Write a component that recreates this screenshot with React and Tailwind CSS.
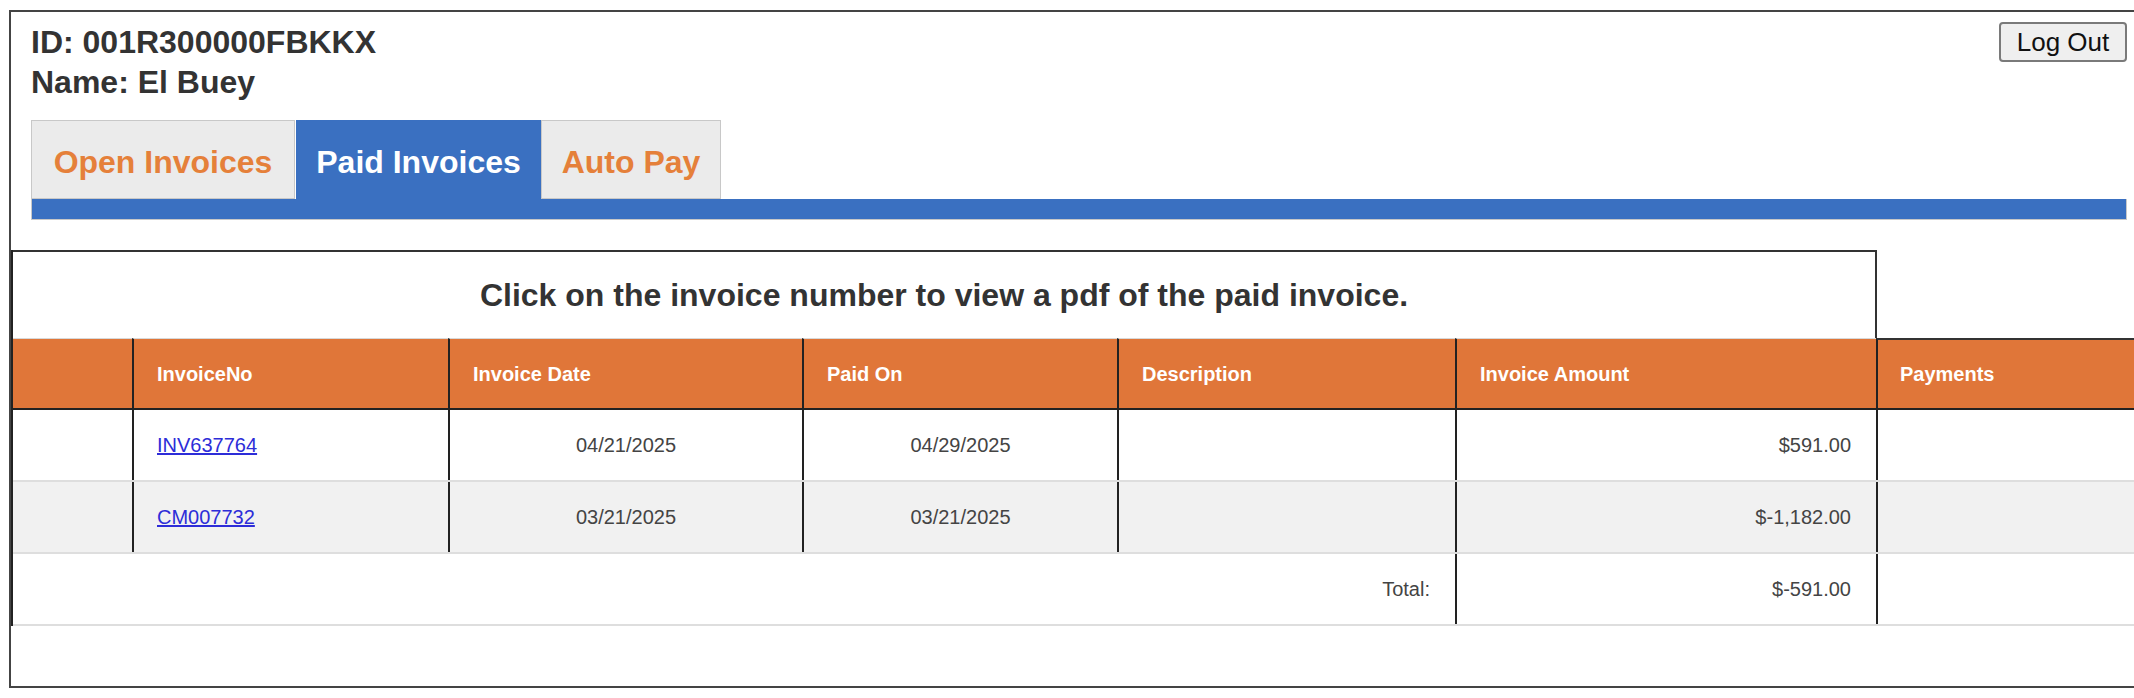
const rows = [
  { no: 'INV637764', date: '04/21/2025', paid: '04/29/2025', desc: '', amount: '$591.00', striped: false },
  { no: 'CM007732', date: '03/21/2025', paid: '03/21/2025', desc: '', amount: '$-1,182.00', striped: true },
];

const tabs = [
  { label: 'Open Invoices', width: 'w-[264px]', active: false },
  { label: 'Paid Invoices', width: 'w-[245px]', active: true },
  { label: 'Auto Pay', width: 'w-[180px]', active: false },
];

const gridCols = 'grid grid-cols-[119px_316px_354px_315px_338px_421px_1fr]';

const App = () => {
  return (
    <div className="w-[2134px] h-[698px] overflow-hidden bg-white font-['Liberation_Sans',Arial,sans-serif]">
      <div className="ml-[9px] mt-[10px] w-[2200px] h-[678px] border-2 border-[#444]">
        {/* account header + tabs */}
        <div className="ml-[20px] w-[2096px]">
          <div className="pt-[10px] flex items-start justify-between">
            <div className="text-[32px] leading-[40px] font-bold text-[#333]">
              <div>ID: 001R300000FBKKX</div>
              <div>Name: El Buey</div>
            </div>
            <button className="w-[128px] h-[40px] bg-[#efefef] border-2 border-[#7a7a7a] rounded-[4px] text-[26px] leading-none text-[#111]">
              Log Out
            </button>
          </div>

          <div className="mt-[18px]">
            <div className="flex items-end h-[79px]">
              {tabs.map((tab) => (
                <div
                  key={tab.label}
                  className={
                    tab.active
                      ? `${tab.width} h-[79px] flex items-center justify-center pt-[4px] bg-[#3a70c1] border border-b-0 border-[#3a70c1] text-white text-[32px] font-bold`
                      : `${tab.width} h-[79px] mr-[1px] flex items-center justify-center pt-[4px] bg-[#ebebeb] border border-[#c8c8c8] text-[#e5803a] text-[32px] font-bold`
                  }
                >
                  {tab.label}
                </div>
              ))}
            </div>
            <div className="h-[21px] bg-[#3a70c1] border border-t-0 border-[#c8c8c8]" />
          </div>
        </div>

        {/* paid invoice table */}
        <div className="mt-[30px] border-l-2 border-[#222]">
          <div className="w-[1864px] h-[88px] border-t-2 border-r-2 border-[#333] flex items-center justify-center text-[32px] font-bold text-[#333]">
            Click on the invoice number to view a pdf of the paid invoice.
          </div>

          <div className={`${gridCols} h-[72px] bg-[#e07639] text-white text-[20px] font-bold`}>
            <div className="border-t border-b-2 border-t-[#d8d8d8] border-b-[#222]" />
            {['InvoiceNo', 'Invoice Date', 'Paid On', 'Description', 'Invoice Amount'].map((h) => (
              <div
                key={h}
                className="flex items-center pl-[23px] border-l-2 border-l-[#222] border-t border-t-[#d8d8d8] border-b-2 border-b-[#222]"
              >
                {h}
              </div>
            ))}
            <div className="flex items-center pl-[22px] border-l-2 border-l-[#222] border-t-2 border-t-[#333] border-b-2 border-b-[#222]">
              Payments
            </div>
          </div>

          {rows.map((r) => (
            <div
              key={r.no}
              className={`${gridCols} h-[72px] border-b-2 border-[#dedede] text-[20px] text-[#444] ${r.striped ? 'bg-[#f1f1f1]' : 'bg-white'}`}
            >
              <div />
              <div className="flex items-center pl-[23px] border-l-2 border-[#222]">
                <a href="#" className="text-[#2d2dd8] underline">
                  {r.no}
                </a>
              </div>
              <div className="flex items-center justify-center border-l-2 border-[#222]">{r.date}</div>
              <div className="flex items-center justify-center border-l-2 border-[#222]">{r.paid}</div>
              <div className="flex items-center border-l-2 border-[#222]">{r.desc}</div>
              <div className="flex items-center justify-end pr-[25px] border-l-2 border-[#222]">{r.amount}</div>
              <div className="border-l-2 border-[#222]" />
            </div>
          ))}

          <div className="grid grid-cols-[1442px_421px_1fr] h-[72px] border-b-2 border-[#dedede] text-[20px] text-[#444]">
            <div className="flex items-center justify-end pr-[25px]">Total:</div>
            <div className="flex items-center justify-end pr-[25px] border-l-2 border-[#222]">$-591.00</div>
            <div className="border-l-2 border-[#222]" />
          </div>
        </div>
      </div>
    </div>
  );
};

export default App;
